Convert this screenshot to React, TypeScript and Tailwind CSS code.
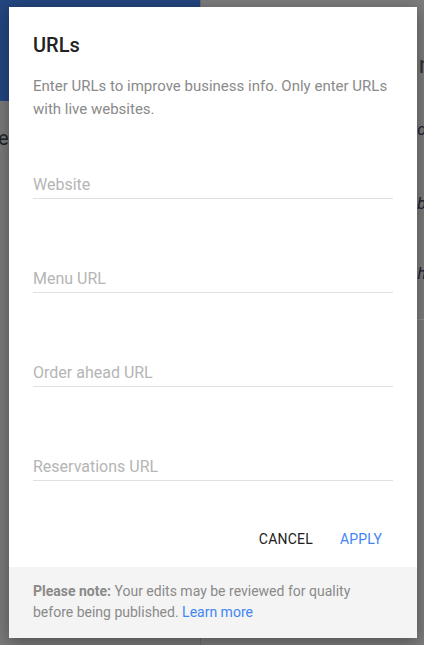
import React from "react";

export default function App() {
  const fields = ["Website", "Menu URL", "Order ahead URL", "Reservations URL"];
  return (
    <div className="relative w-[424px] h-[645px] overflow-hidden bg-[#7a7a7a]" style={{ fontFamily: "Roboto, 'Liberation Sans', sans-serif" }}>
      {/* background page (dimmed) */}
      <div className="flex h-full">
        <div className="w-[201px] flex flex-col border-r border-[#6a6a6a]">
          <div className="h-[101px] bg-[#23467f]" />
          <div className="pt-[22px] text-[20px] text-[#222] pl-0">
            <span className="-ml-[2px]">e</span>
          </div>
        </div>
        <div className="flex-1 flex flex-col bg-[#7c7c7c]">
          <div className="h-[320px] border-b border-[#8e8e8e] flex flex-col items-end pr-[0px]">
            <div className="mt-[50px] text-[24px] text-[#333] leading-[30px] translate-x-[8px]">n</div>
            <div className="mt-[38px] text-[16px] italic text-[#1c1c3a] translate-x-[2px]">to</div>
            <div className="mt-[50px] text-[16px] italic text-[#1c1c3a] translate-x-[2px]">ab</div>
            <div className="mt-[46px] text-[16px] italic text-[#1c1c3a] translate-x-[2px]">h</div>
          </div>
        </div>
      </div>

      {/* dialog */}
      <div className="absolute left-[9px] top-[7px] w-[408px] h-[631px] bg-white flex flex-col shadow-[0_4px_16px_rgba(0,0,0,0.35)]">
        <div className="flex-1 flex flex-col px-[24px]">
          <div className="pt-[24px] text-[20px] leading-[28px] font-medium text-[#222]">URLs</div>
          <div className="mt-[16px] text-[15px] leading-[23px] text-[#8a8a8a]">
            Enter URLs to improve business info. Only enter URLs with live websites.
          </div>
          <div className="flex flex-col mt-[54px] gap-[70px]">
            {fields.map((f) => (
              <div key={f} className="border-b border-[#e0e0e0] h-[24px] pb-[4px] text-[16px] leading-[20px] text-[#b5b5b5]">
                {f}
              </div>
            ))}
          </div>
          <div className="flex justify-end gap-[27px] mt-[48px] pr-[11px] text-[14px] tracking-[0.2px]">
            <span className="text-[#212121]">CANCEL</span>
            <span className="text-[#4285f4]">APPLY</span>
          </div>
        </div>
        <div className="h-[71px] bg-[#f4f4f4] px-[24px] pt-[14px] text-[14px] leading-[21px] text-[#8a8a8a]">
          <span className="font-bold">Please note:</span> Your edits may be reviewed for quality before being published.{" "}
          <span className="text-[#4285f4]">Learn more</span>
        </div>
      </div>
    </div>
  );
}
